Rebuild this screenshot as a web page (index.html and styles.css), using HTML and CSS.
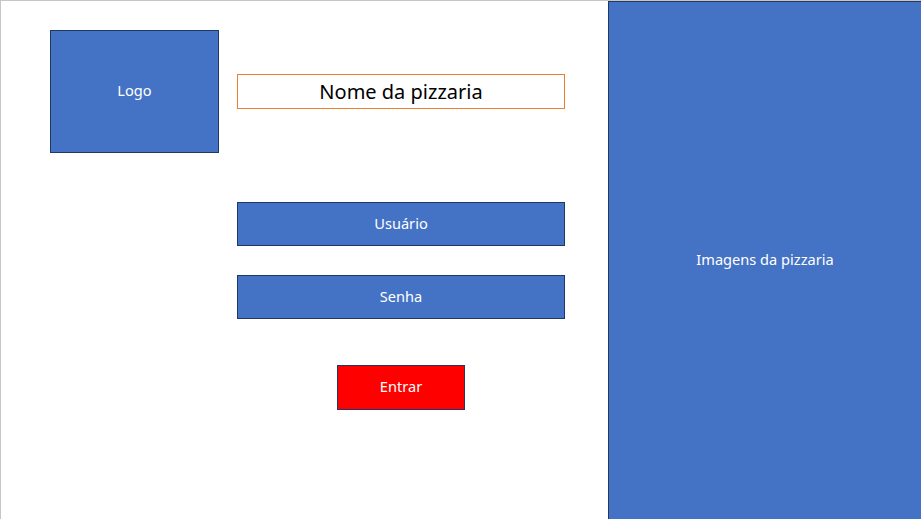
FILE: index.html
```html
<!DOCTYPE html>
<html lang="pt-BR">
<head>
<meta charset="utf-8">
<title>Login - Pizzaria</title>
<link rel="stylesheet" href="styles.css">
</head>
<body>
<div class="page">
  <div class="left">
    <div class="header">
      <div class="box logo">Logo</div>
      <div class="title">Nome da pizzaria</div>
    </div>
    <div class="form">
      <div class="box field">Usuário</div>
      <div class="box field senha">Senha</div>
      <div class="box enter">Entrar</div>
    </div>
  </div>
  <div class="box images">Imagens da pizzaria</div>
</div>
</body>
</html>
```
FILE: styles.css
```css
* { box-sizing: border-box; }
html, body { margin: 0; padding: 0; background: #fff; }
body { font-family: "Noto Sans", "Open Sans", "DejaVu Sans", sans-serif; }
.page {
  width: 921px;
  height: 519px;
  border-top: 1px solid #c6c6c6;
  border-left: 1px solid #c6c6c6;
  display: flex;
  overflow: hidden;
}
.left {
  width: 607px;
  flex: none;
  padding: 29px 0 0 49px;
}
.header {
  display: flex;
  align-items: center;
  gap: 18px;
}
.box {
  background: #4472c4;
  border: 1px solid #203864;
  color: #fff;
  font-size: 14.6px;
  padding-bottom: 3px;
  display: flex;
  align-items: center;
  justify-content: center;
}
.logo { width: 169px; height: 123px; }
.title {
  width: 328px;
  height: 35px;
  border: 1px solid #ed7d31;
  color: #000;
  font-size: 20px;
  padding-bottom: 1px;
  display: flex;
  align-items: center;
  justify-content: center;
}
.form {
  margin: 49px 0 0 187px;
  width: 328px;
  display: flex;
  flex-direction: column;
}
.field { height: 44px; }
.senha { margin-top: 29px; }
.enter {
  margin-top: 46px;
  align-self: center;
  width: 128px;
  height: 45px;
  background: #ff0000;
}
.images {
  flex: 1;
  height: 518px;
  border-right: none;
  border-bottom: none;
}
```
